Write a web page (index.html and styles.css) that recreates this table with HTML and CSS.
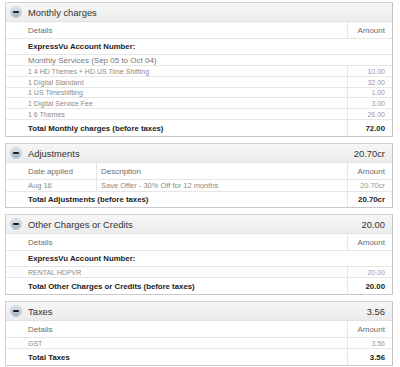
FILE: index.html
```html
<!DOCTYPE html>
<html>
<head>
<meta charset="utf-8">
<link rel="stylesheet" href="styles.css">
</head>
<body>
<div class="page">

  <section class="panel">
    <div class="phead">
      <svg class="icon" width="12" height="12" viewBox="0 0 12 12"><defs><linearGradient id="g1" x1="0" y1="0" x2="0" y2="1"><stop offset="0" stop-color="#e4ebf2"/><stop offset="1" stop-color="#9fb0c2"/></linearGradient></defs><circle cx="6" cy="6" r="5.5" fill="url(#g1)" stroke="#c5ced8" stroke-width="0.8"/><rect x="3.2" y="5" width="5.6" height="2" fill="#1e1e1e"/></svg>
      <span class="ptitle">Monthly charges</span>
    </div>
    <div class="row thead h17"><div class="c">Details</div><div class="c amt">Amount</div></div>
    <div class="row full h16"><div class="c bold">ExpressVu Account Number:</div></div>
    <div class="row full h11"><div class="c sub">Monthly Services (Sep 05 to Oct 04)</div></div>
    <div class="row item h11"><div class="c">1 4 HD Themes + HD US Time Shifting</div><div class="c amt">10.00</div></div>
    <div class="row item h11"><div class="c">1 Digital Standard</div><div class="c amt">32.00</div></div>
    <div class="row item h10"><div class="c">1 US Timeshifting</div><div class="c amt">1.00</div></div>
    <div class="row item h11"><div class="c">1 Digital Service Fee</div><div class="c amt">3.00</div></div>
    <div class="row item h11"><div class="c">1 6 Themes</div><div class="c amt">26.00</div></div>
    <div class="row total h16 last"><div class="c">Total Monthly charges (before taxes)</div><div class="c amt">72.00</div></div>
  </section>

  <section class="panel">
    <div class="phead">
      <svg class="icon" width="12" height="12" viewBox="0 0 12 12"><defs><linearGradient id="g2" x1="0" y1="0" x2="0" y2="1"><stop offset="0" stop-color="#e4ebf2"/><stop offset="1" stop-color="#9fb0c2"/></linearGradient></defs><circle cx="6" cy="6" r="5.5" fill="url(#g2)" stroke="#c5ced8" stroke-width="0.8"/><rect x="3.2" y="5" width="5.6" height="2" fill="#1e1e1e"/></svg>
      <span class="ptitle">Adjustments</span>
      <span class="pamt">20.70cr</span>
    </div>
    <div class="row three thead h17"><div class="c">Date applied</div><div class="c">Description</div><div class="c amt">Amount</div></div>
    <div class="row three item adj h12"><div class="c">Aug 16</div><div class="c">Save Offer - 30% Off for 12 months</div><div class="c amt">20.70cr</div></div>
    <div class="row total h15 last"><div class="c">Total Adjustments (before taxes)</div><div class="c amt">20.70cr</div></div>
  </section>

  <section class="panel">
    <div class="phead">
      <svg class="icon" width="12" height="12" viewBox="0 0 12 12"><defs><linearGradient id="g3" x1="0" y1="0" x2="0" y2="1"><stop offset="0" stop-color="#e4ebf2"/><stop offset="1" stop-color="#9fb0c2"/></linearGradient></defs><circle cx="6" cy="6" r="5.5" fill="url(#g3)" stroke="#c5ced8" stroke-width="0.8"/><rect x="3.2" y="5" width="5.6" height="2" fill="#1e1e1e"/></svg>
      <span class="ptitle">Other Charges or Credits</span>
      <span class="pamt">20.00</span>
    </div>
    <div class="row thead h17"><div class="c">Details</div><div class="c amt">Amount</div></div>
    <div class="row full h16"><div class="c bold">ExpressVu Account Number:</div></div>
    <div class="row item h11"><div class="c">RENTAL HDPVR</div><div class="c amt">20.00</div></div>
    <div class="row total h16 last"><div class="c">Total Other Charges or Credits (before taxes)</div><div class="c amt">20.00</div></div>
  </section>

  <section class="panel">
    <div class="phead">
      <svg class="icon" width="12" height="12" viewBox="0 0 12 12"><defs><linearGradient id="g4" x1="0" y1="0" x2="0" y2="1"><stop offset="0" stop-color="#e4ebf2"/><stop offset="1" stop-color="#9fb0c2"/></linearGradient></defs><circle cx="6" cy="6" r="5.5" fill="url(#g4)" stroke="#c5ced8" stroke-width="0.8"/><rect x="3.2" y="5" width="5.6" height="2" fill="#1e1e1e"/></svg>
      <span class="ptitle">Taxes</span>
      <span class="pamt">3.56</span>
    </div>
    <div class="row thead h17"><div class="c">Details</div><div class="c amt">Amount</div></div>
    <div class="row item h11"><div class="c">GST</div><div class="c amt">3.56</div></div>
    <div class="row total h16 last"><div class="c">Total Taxes</div><div class="c amt">3.56</div></div>
  </section>

</div>
</body>
</html>
```

FILE: styles.css
```css
html, body {
  margin: 0;
  padding: 0;
  background: #ffffff;
}

.page {
  padding: 2px 7px 0 5px;
  display: flex;
  flex-direction: column;
  gap: 6px;
  font-family: "Liberation Sans", Arial, sans-serif;
}

.panel {
  border: 1px solid #d2d2d2;
  border-right-color: #c4c4c4;
  border-bottom-color: #c8c8c8;
  background: #fff;
}

.phead {
  height: 19px;
  box-sizing: border-box;
  display: flex;
  align-items: center;
  padding: 0 7px 0 4px;
  background: linear-gradient(to bottom, #f6f6f6 0%, #ececec 100%);
  border-bottom: 1px solid #e2e2e2;
}

.icon {
  flex: none;
  display: block;
}

.ptitle {
  margin-left: 6px;
  font-size: 9.4px;
  color: #333;
  flex: 1;
}

.pamt {
  font-size: 9.4px;
  color: #333;
}

.row {
  display: grid;
  grid-template-columns: 1fr 45px;
  box-sizing: border-box;
  border-bottom: 1px solid #e6e6e6;
  align-items: center;
}

.row.three {
  grid-template-columns: 90px 1fr 45px;
}

.row.full {
  grid-template-columns: 1fr;
}

.row.last {
  border-bottom: none;
}

.h17 { height: 17px; }
.h16 { height: 16px; }
.h15 { height: 15px; }
.h12 { height: 12px; }
.h11 { height: 11px; }
.h10 { height: 10px; }

.c {
  height: 100%;
  display: flex;
  align-items: center;
  padding-left: 22px;
  white-space: nowrap;
}

.c.amt {
  justify-content: flex-end;
  padding-left: 0;
  padding-right: 7px;
  border-left: 1px solid #e6e6e6;
}

.three .c:nth-child(2) {
  padding-left: 4px;
  border-left: 1px solid #e6e6e6;
}

.thead .c {
  font-size: 8px;
  color: #6e6e6e;
}

.bold {
  font-size: 7.8px;
  font-weight: bold;
  color: #222;
}

.sub {
  font-size: 8px;
  color: #777;
}

.item .c {
  font-size: 7px;
  color: #8a8a8a;
}

.item .c.amt {
  color: #9a9a9a;
}

.adj .c {
  font-size: 7.5px;
}

.total .c {
  font-size: 7.8px;
  font-weight: bold;
  color: #222;
}
```
